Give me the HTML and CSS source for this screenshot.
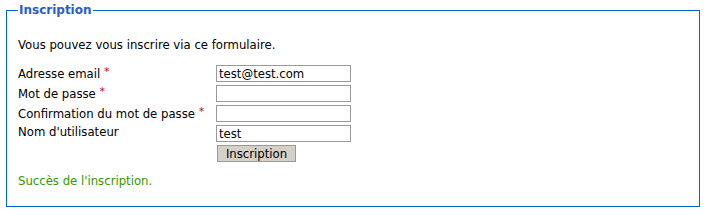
FILE: index.html
```html
<!DOCTYPE html>
<html lang="fr">
<head>
<meta charset="utf-8">
<title>Inscription</title>
<link rel="stylesheet" href="styles.css">
</head>
<body>
<fieldset class="box">
  <legend class="box-title">Inscription</legend>
  <p class="intro">Vous pouvez vous inscrire via ce formulaire.</p>
  <form class="form">
    <label class="lbl" for="email">Adresse email <span class="req">*</span></label>
    <input class="field" id="email" type="text" value="test@test.com">
    <label class="lbl" for="pw">Mot de passe <span class="req">*</span></label>
    <input class="field" id="pw" type="password">
    <label class="lbl" for="pw2">Confirmation du mot de passe <span class="req">*</span></label>
    <input class="field" id="pw2" type="password">
    <label class="lbl" for="user">Nom d'utilisateur</label>
    <input class="field" id="user" type="text" value="test">
    <span></span>
    <div><button class="btn" type="button">Inscription</button></div>
  </form>
  <p class="success">Succès de l'inscription.</p>
</fieldset>
</body>
</html>
```

FILE: styles.css
```css
html, body {
  margin: 0;
  padding: 0;
  background: #fff;
}
body {
  font-family: "DejaVu Sans", Verdana, sans-serif;
  font-size: 11.7px;
  color: #000;
  padding: 3px 7px 0 6px;
}
.box {
  margin: 0;
  box-sizing: border-box;
  width: 694px;
  height: 204px;
  border: 1px solid #0066cc;
  padding: 0 11px;
}
.box-title {
  padding: 0 1px;
  font-weight: bold;
  color: #2a5cc8;
  font-size: 12px;
  line-height: 14px;
}
.intro {
  margin: 21px 0 12px;
  line-height: 15px;
}
.form {
  display: grid;
  grid-template-columns: 198px auto;
  grid-auto-rows: 20px;
  align-items: start;
}
.lbl {
  line-height: 14px;
}
.req {
  color: #cc0000;
  font-size: 11px;
  vertical-align: 3px;
}
.field {
  box-sizing: border-box;
  width: 135px;
  height: 17px;
  margin: 0;
  padding: 0 2px;
  border: 1px solid #999;
  font-family: "DejaVu Sans", Verdana, sans-serif;
  font-size: 11.7px;
  color: #000;
  background: #fff;
}
.btn {
  box-sizing: border-box;
  margin: 0 0 0 1px;
  height: 17px;
  width: 79px;
  padding: 0;
  border: 1px solid #999;
  background: #d4d0c8;
  font-family: "DejaVu Sans", Verdana, sans-serif;
  font-size: 11.7px;
  color: #000;
  line-height: 14px;
}
.success {
  margin: 9px 0 0;
  color: #339900;
  line-height: 15px;
}
```
